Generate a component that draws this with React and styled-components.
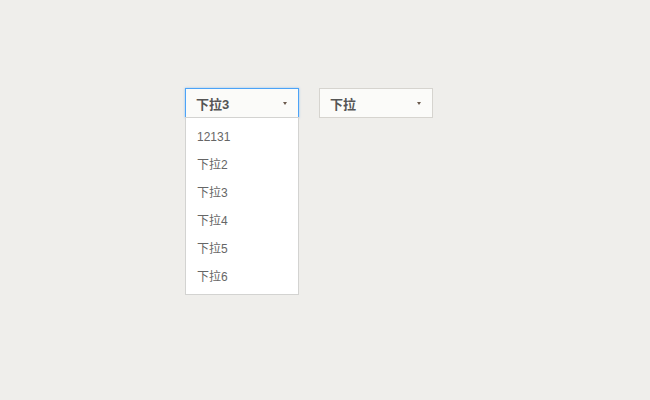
import React from "react";
import styled, { createGlobalStyle } from "styled-components";

const GlobalStyle = createGlobalStyle`
    html, body {
        margin: 0;
        padding: 0;
        background: #efeeeb;
        font-family: "Liberation Sans", "Noto Sans CJK SC", sans-serif;
    }
`;

const Page = styled.div`
    width: 650px;
    height: 400px;
    box-sizing: border-box;
    padding: 88px 0 0 185px;
    display: flex;
    align-items: flex-start;
    gap: 20px;
`;

const SelectWrap = styled.div`
    position: relative;
    width: 114px;
`;

const SelectBox = styled.div`
    box-sizing: border-box;
    height: 30px;
    display: flex;
    align-items: center;
    justify-content: space-between;
    padding: 0 11px 0 10px;
    background: #fbfbf9;
    border: 1px solid ${({ open }) => (open ? "#4ca3f7" : "#d6d4cf")};
    box-shadow: ${({ open }) => (open ? "0 0 2px rgba(76,163,247,.6)" : "none")};
    color: #555;
    font-size: 13px;
    font-weight: bold;
`;

const Arrow = styled.span`
    width: 0;
    height: 0;
    border-left: 2.5px solid transparent;
    border-right: 2.5px solid transparent;
    border-top: 3px solid #6b5a4d;
    margin-top: 1px;
`;

const Menu = styled.ul`
    position: absolute;
    top: 29px;
    left: 0;
    right: 0;
    margin: 0;
    padding: 5px 0 3px;
    list-style: none;
    background: #fff;
    border: 1px solid #d3d3d1;
    box-sizing: border-box;
`;

const Item = styled.li`
    height: 28px;
    line-height: 28px;
    padding-left: 11px;
    font-size: 12px;
    color: #666;
`;

const items = ["12131", "下拉2", "下拉3", "下拉4", "下拉5", "下拉6"];

export default function App() {
    return (
        <>
            <GlobalStyle />
            <Page>
                <SelectWrap>
                    <SelectBox open>
                        <span>下拉3</span>
                        <Arrow />
                    </SelectBox>
                    <Menu>
                        {items.map((it) => (
                            <Item key={it}>{it}</Item>
                        ))}
                    </Menu>
                </SelectWrap>
                <SelectWrap>
                    <SelectBox>
                        <span>下拉</span>
                        <Arrow />
                    </SelectBox>
                </SelectWrap>
            </Page>
        </>
    );
}
